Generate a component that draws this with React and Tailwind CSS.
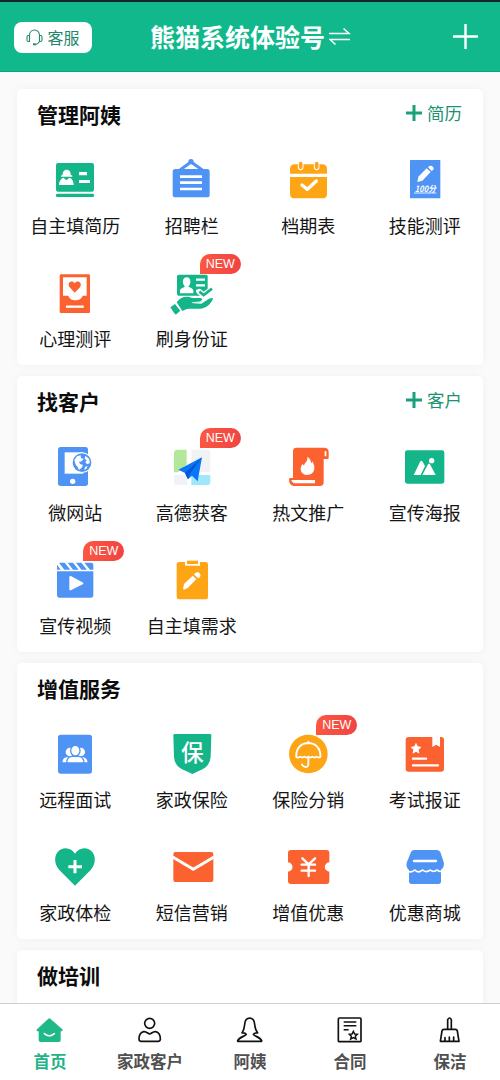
import React from 'react';

const GREEN = '#13b589';
const BLUE = '#4f94f4';
const ORANGE = '#fc6230';
const YELLOW = '#fea516';

// Every icon is drawn on a 144 unit canvas with its origin in the middle
const Icon = ({ className = 'w-12 h-12', children }) => (
    <svg className={`${className} block shrink-0`} viewBox="-72 -72 144 144" fill="none">{children}</svg>
);

const stroke = (color, width) => ({ stroke: color, strokeWidth: width, strokeLinecap: 'round', strokeLinejoin: 'round' });

const ResumeIcon = () => (
    <Icon>
        <rect x="-57" y="-51" width="114" height="86" rx="6" fill={GREEN} />
        <rect x="-57" y="41" width="114" height="10" rx="4" fill={GREEN} />
        <path d="M-37-16C-37-24-34-31-25-31S-13-24-13-16L-8-13V-10H-42V-13ZM-48 15C-48 3-41-5-34-7L-26 1L-17-7C-9-5-4 3-4 15Z" fill="#fff" />
        <path d="M12-24H36V-14H12ZM12 0H45V9H12Z" fill="#fff" />
    </Icon>
);

const BoardIcon = () => (
    <Icon>
        <rect x="-58" y="-33" width="111" height="85" rx="8" fill={BLUE} />
        <path d="M-22-33L-3-47L17-33Z" fill="#fff" />
        <path d="M-35-31L-3-54L30-31" {...stroke(BLUE, 9)} />
        <circle cx="-3" cy="-55" r="8" fill={BLUE} />
        <path d="M-36-10H30M-36 8H30M-36 27H30" stroke="#fff" strokeWidth="8" />
    </Icon>
);

const CalendarIcon = () => (
    <Icon>
        <path d="M-54-19V-33Q-54-47-40-47H43Q57-47 57-33V-19Z" fill={YELLOW} />
        <path d="M-54-9H57V41Q57 55 43 55H-40Q-54 55-54 41Z" fill={YELLOW} />
        <path d="M-22-47V-38M26-47V-38" {...stroke('#fff', 17)} />
        <path d="M-22-49V-38M26-49V-38" {...stroke(YELLOW, 11)} />
        <path d="M-18 15L-2 28L25 3" {...stroke('#fff', 10)} />
    </Icon>
);

const ScoreIcon = () => (
    <Icon>
        <rect x="-45" y="-60" width="91" height="115" rx="2" fill={BLUE} />
        <path d="M-23 6L-20-10L5-35L17-24L-8 2Z" fill="#fff" />
        <path d="M9-38L13-42Q19-45 24-39T23-29L20-27Z" fill="#fff" />
        <text x="1" y="35" textAnchor="middle" fill="#fff" fontSize="26" fontWeight="700" fontStyle="italic" textLength="63" lengthAdjust="spacingAndGlyphs">100分</text>
        <path d="M-33 39H34" stroke="#fff" strokeWidth="2.5" />
    </Icon>
);

const MindIcon = () => (
    <Icon>
        <rect x="-46" y="-56" width="91" height="116" rx="4" fill={ORANGE} />
        <path d="M-36-47H35V8H23C18 26-15 27-20 8H-36Z" fill="#fff" />
        <path d="M-1-1L-16-17C-26-31-9-41-1-29C7-41 24-31 15-17Z" fill={ORANGE} />
        <path d="M-27 41H26" stroke="#fff" strokeWidth="7" />
    </Icon>
);

const IdCardIcon = () => (
    <Icon>
        <rect x="-45" y="-55" width="92" height="63" rx="5" fill={GREEN} />
        <path d="M-36 1V-6C-36-15-26-16-21-19C-31-29-29-47-16-47S-1-29-11-19C-5-16 4-15 4-6V1Z" fill="#fff" />
        <path d="M12-40H39M12-23H39M12-6H18" stroke="#fff" strokeWidth="7" />
        <path d="M22-4L35 7L60-12" {...stroke('#fff', 17)} />
        <path d="M22-4L35 6L60-13" stroke={GREEN} strokeWidth="8" />
        <path d="M-65 43L-51 33L-35 53L-47 64Q-50 65-52 62Z" fill={GREEN} />
        <path d="M-46 28C-36 14-24 10-8 12C2 17 13 14 24 15C35 17 32 26 22 28L3 31L28 32L51 17Q64 12 63 18C55 35 42 46 24 47H-8C-17 47-22 50-29 54Z" fill={GREEN} />
        <path d="M1 29L23 27Q31 25 31 21" {...stroke('#fff', 2.5)} />
    </Icon>
);

const SiteIcon = () => (
    <Icon>
        <rect x="-51" y="-60" width="90" height="117" rx="8" fill={BLUE} />
        <path d="M-31-44H25V20H-31Z" fill="#fff" />
        <circle cx="21" cy="-13" r="31" fill="#fff" />
        <circle cx="21" cy="-13" r="28" fill={BLUE} />
        <path d="M-2-21L6-32L17-35L18-27L26-24L20-17L12-15L15-9L24-6L20 2L12 9L8 0L2-7ZM31-34L42-25L45-12L37-8L31-14L35-20L29-25ZM30 0L38-3L34 6L28 8Z" fill="#fff" />
        <circle cx="-7" cy="43" r="8" fill="#fff" />
    </Icon>
);

const MapIcon = () => (
    <Icon>
        <path d="M-54-42Q-54-52-44-52H-16V-7L-42 16H-54Z" fill="#b3e79a" />
        <path d="M-2-52H45Q55-52 55-42V16H-2ZM-54 24H-14V54H-44Q-54 54-54 44Z" fill="#f0f2f3" />
        <path d="M-2 24H55V44Q55 54 45 54H-2Z" fill="#a0e6fc" />
        <path d="M30-29L-41 8L-21 18L-12 37L0 26L17 43Z" fill="#0a78f5" />
        <path d="M30-29L-21 18L-12 37L-7 21Z" fill="#0556d8" />
    </Icon>
);

const ScrollIcon = () => (
    <Icon>
        <path d="M-45-48Q-45-58-34-58H50Q62-57 62-46V-27Q62-24 58-24H47V46Q47 57 36 57H-43Q-57 55-57 37Q-57 33-53 33H-45Z" fill={ORANGE} />
        <rect x="50" y="-48" width="5" height="16" rx="2" fill="#fff" />
        <path d="M-50 39H21V49H-42Q-48 48-50 39Z" fill="#fff" />
        <path d="M-2-31C10-23 8-15 10-11L13-17C25 2 19 24-2 24S-27 3-16-9L-12-4C-10-14 1-18-2-31Z" fill="#fff" />
    </Icon>
);

const PosterIcon = () => (
    <Icon>
        <rect x="-60" y="-50" width="118" height="100" rx="7" fill={GREEN} />
        <path d="M-34 24L-14-17Q-11-21-8-17L0-3L-13 24ZM-8 24L9-8Q12-13 15-8L32 24Z" fill="#fff" />
        <circle cx="20" cy="-19" r="8" fill="#fff" />
    </Icon>
);

const VideoIcon = () => (
    <Icon>
        <path d="M-54-26H55V45Q55 53 47 53H-46Q-54 53-54 45Z" fill={BLUE} />
        <path d="M-54-46L-43-31H-54ZM-48-52H-31L-14-31H-32ZM-22-52H-6L11-31H-6ZM3-52H19L36-31H19ZM28-52H48Q55-52 55-46V-31H45Z" fill={BLUE} />
        <path d="M-14-9L22 10L-14 28Z" fill="#fff" {...stroke('#fff', 6)} />
    </Icon>
);

const DemandIcon = () => (
    <Icon>
        <rect x="-46" y="-54" width="94" height="112" rx="7" fill={YELLOW} />
        <path d="M-21-55H24V-43H-21Z" fill="#fff" />
        <path d="M-15-58H18V-48H-15Z" fill={YELLOW} />
        <path d="M-27 27L-24 12L2-13L13-2L-12 23L-24 29Z" fill="#fff" />
        <path d="M6-17L10-21Q17-26 23-20T24-8L18-5Z" fill="#fff" />
    </Icon>
);

const MeetingIcon = () => (
    <Icon>
        <rect x="-51" y="-58" width="102" height="117" rx="8" fill={BLUE} />
        <circle cx="-15" cy="-6" r="13" fill="#fff" />
        <circle cx="17" cy="-6" r="13" fill="#fff" />
        <path d="M-37 25V20Q-35 11-24 10H26Q35 12 37 20V25Z" fill="#fff" />
        <ellipse cx="1" cy="-10" rx="14" ry="16" fill="#fff" stroke={BLUE} strokeWidth="4" />
        <path d="M-25 27C-25 13-19 8-9 7H11C21 8 27 13 27 27Z" fill="#fff" stroke={BLUE} strokeWidth="4" />
    </Icon>
);

const InsureIcon = () => (
    <Icon>
        <path d="M-56-56Q-56-60-51-60H54Q58-60 58-56L56 8Q54 28 41 40Q33 46 20 51L1 60L-18 51Q-31 46-39 40Q-53 28-54 8Z" fill={GREEN} />
        <text x="1" y="21" textAnchor="middle" fill="#fff" fontSize="68" fontWeight="500">保</text>
    </Icon>
);

const UmbrellaIcon = () => (
    <Icon>
        <circle cx="1" cy="0" r="58" fill={YELLOW} />
        <path d="M1-37V-32M-35 9C-39-47 41-47 37 9Q31 13 25 8Q19 13 13 8Q7 13 1 8Q-5 13-11 8Q-17 13-23 8Q-29 13-35 9ZM1 9V31Q-1 42-11 38Q-17 36-18 31" {...stroke('#fff', 5.5)} />
    </Icon>
);

const ExamIcon = () => (
    <Icon>
        <rect x="-58" y="-51" width="115" height="104" rx="9" fill={ORANGE} />
        <path d="M22-52H45V-21L34-28L22-21Z" fill="#fff" />
        <path d="M-27-34L-22-23L-11-21L-19-13L-17-1L-27-7L-37-1L-35-13L-43-21L-32-23Z" fill="#fff" />
        <path d="M-36 14H3M-36 34H39" {...stroke('#fff', 7)} />
    </Icon>
);

const HealthIcon = () => (
    <Icon>
        <path d="M0 56L-47 9C-67-14-62-45-40-54C-22-60-8-52 0-40C8-52 22-60 40-54C62-45 67-14 47 9Z" fill={GREEN} />
        <path d="M-20-1H21M0-21V19" stroke="#fff" strokeWidth="9" />
    </Icon>
);

const MailIcon = () => (
    <Icon>
        <rect x="-56" y="-45" width="120" height="90" rx="6" fill={ORANGE} />
        <path d="M-58-30L4 7L66-30" stroke="#fff" strokeWidth="9" />
    </Icon>
);

const CouponIcon = () => (
    <Icon>
        <path d="M-60-42Q-60-51-51-51H55Q64-51 64-42V-14C46-12 46 12 64 14V42Q64 51 55 51H-51Q-60 51-60 42V14C-42 12-42-12-60-14Z" fill={ORANGE} />
        <path d="M-17-26L2-8L21-26M-19-7H21M-19 11H21M2-8V27" {...stroke('#fff', 7)} />
    </Icon>
);

const ShopIcon = () => (
    <Icon>
        <path d="M-48 0H48V43Q48 51 40 51H-40Q-48 51-48 43Z" fill={BLUE} />
        <path d="M-42-45Q-39-51-33-51H35Q42-51 46-45L56-15C60 2 48 14 33 11Q25 20 16 12Q1 24-14 12Q-23 20-31 12C-48 15-58 2-55-13Z" fill={BLUE} />
        <path d="M-50 14C-40 17-34 12-30 9C-20 19-16 14-7 9C3 19 9 12 16 9C26 18 30 11 36 9C43 14 47 15 51 12" {...stroke('#fff', 5)} />
        <path d="M-33-18H33" {...stroke('#fff', 7)} />
    </Icon>
);

// Bottom bar icons
const HomeIcon = () => (
    <Icon>
        <path d="M-5-34Q-2-37 1-34L37-2Q40 3 35 4H32V31Q32 36 27 36H-28Q-34 36-34 31V4H-38Q-43 3-39-2Z" fill="#1fb888" />
        <path d="M-17 11Q-2 24 13 11" {...stroke('#fff', 5)} />
    </Icon>
);

const CustomerIcon = () => (
    <Icon>
        <circle cx="-1" cy="-20" r="15" stroke="#111" strokeWidth="5" />
        <path d="M-19 5C-10 4-6 12-1 12S8 4 17 5C27 7 31 16 31 28Q30 34 24 34H-26Q-33 34-33 28C-33 16-29 7-19 5Z" stroke="#111" strokeWidth="5" />
    </Icon>
);

const NannyIcon = () => (
    <Icon>
        <path d="M-11 13Q-14 8-24 9C-17-1-17-8-16-17C-14-42 12-42 14-17C15-8 15-1 23 9Q13 8 10 13C12 19 30 20 35 32V34H-37V32C-32 20-13 19-11 13Z" {...stroke('#111', 5)} />
    </Icon>
);

const ContractIcon = () => (
    <Icon>
        <rect x="-35" y="-36" width="68" height="71" rx="3" stroke="#111" strokeWidth="5" />
        <path d="M-19-24H19M-19-13H19M-19-1H-4" stroke="#111" strokeWidth="4.5" />
        <path d="M10 4L14 12L22 13L16 19L18 27L10 23L2 27L4 19L-2 13L6 12Z" stroke="#111" strokeWidth="4.5" />
    </Icon>
);

const BroomIcon = () => (
    <Icon>
        <path d="M-7-3V-31Q-1-41 4-31V-3M-18-2H16Q21-2 22 3L27 34H-29L-24 3Q-23-2-18-2ZM-15 34V23M-2 34V21M11 34V21" {...stroke('#111', 5)} />
    </Icon>
);

const sections = [
    {
        title: '管理阿姨',
        action: '简历',
        items: [
            { label: '自主填简历', icon: ResumeIcon },
            { label: '招聘栏', icon: BoardIcon },
            { label: '档期表', icon: CalendarIcon },
            { label: '技能测评', icon: ScoreIcon },
            { label: '心理测评', icon: MindIcon },
            { label: '刷身份证', icon: IdCardIcon, isNew: true },
        ],
    },
    {
        title: '找客户',
        action: '客户',
        items: [
            { label: '微网站', icon: SiteIcon },
            { label: '高德获客', icon: MapIcon, isNew: true },
            { label: '热文推广', icon: ScrollIcon },
            { label: '宣传海报', icon: PosterIcon },
            { label: '宣传视频', icon: VideoIcon, isNew: true },
            { label: '自主填需求', icon: DemandIcon },
        ],
    },
    {
        title: '增值服务',
        items: [
            { label: '远程面试', icon: MeetingIcon },
            { label: '家政保险', icon: InsureIcon },
            { label: '保险分销', icon: UmbrellaIcon, isNew: true },
            { label: '考试报证', icon: ExamIcon },
            { label: '家政体检', icon: HealthIcon },
            { label: '短信营销', icon: MailIcon },
            { label: '增值优惠', icon: CouponIcon },
            { label: '优惠商城', icon: ShopIcon },
        ],
    },
    { title: '做培训', items: [] },
];

const tabs = [
    { label: '首页', icon: HomeIcon, active: true },
    { label: '家政客户', icon: CustomerIcon },
    { label: '阿姨', icon: NannyIcon },
    { label: '合同', icon: ContractIcon },
    { label: '保洁', icon: BroomIcon },
];

const Header = () => (
    <header className="h-[72px] shrink-0 bg-[#10b88c] border-t-2 border-[#14262a] border-b border-b-[#0da47c] pl-3.5 pr-[22px] pt-px flex items-center">
        <button className="w-[78px] h-[31px] rounded-lg bg-white flex items-center justify-center gap-1 text-[#23876a] text-[16px] leading-none">
            <svg className="w-[17px] h-[17px]" viewBox="0 0 17 17" fill="none" stroke="currentColor" strokeWidth="1.1">
                <path d="M3.5 6.5C3.5-.8 13.5-.8 13.5 6.5V12.5Q12 15.2 9.5 15.5M3.5 6V12.5H2.5Q1 12.5 1 11V8Q1 6.5 2.5 6.5H3.5M13.5 6.5H14.5Q16 6.5 16 8V11Q16 12.5 14.5 12.5H13.5" />
                <path d="M7 15.3H9.8" strokeWidth="2" />
            </svg>
            <span className="pb-px">客服</span>
        </button>
        <h1 className="ml-[58px] mr-auto pb-0.5 flex items-center gap-1 text-white text-[25px] leading-9 font-bold">
            <span>熊猫系统体验号</span>
            <svg className="w-[22px] h-5" viewBox="0 0 22 20" fill="none" stroke="#fff" strokeWidth="1.5">
                <path d="M0 7.5H20L14.5 2.5M21 13.5H1L6.5 18.5" />
            </svg>
        </h1>
        <svg className="w-[25px] h-[25px] mb-px" viewBox="0 0 25 25" stroke="#fff" strokeWidth="2.4">
            <path d="M12.5 0V25M0 12.5H25" />
        </svg>
    </header>
);

const MenuItem = ({ item }) => {
    const ItemIcon = item.icon;
    return (
        <div className="relative h-[83px] flex flex-col items-center">
            <ItemIcon />
            {item.isNew && (
                <span className="absolute left-1/2 ml-2 -top-[15px] w-[41px] h-5 rounded-[10px] rounded-bl-none bg-linear-to-r from-[#fc5740] to-[#f04443] text-white font-['Liberation_Sans',sans-serif] text-[12.5px] leading-5 text-center">
                    NEW
                </span>
            )}
            <span className="mt-2 text-[18px] leading-[27px] text-[#151515] whitespace-nowrap">{item.label}</span>
        </div>
    );
};

const Section = ({ section }) => (
    <section className="h-[276px] shrink-0 rounded-[5px] bg-white shadow-[0_0_10px_rgba(0,0,0,0.045)]">
        <div className="h-[52px] pl-5 pr-[21px] flex items-center justify-between">
            <h2 className="pb-[3px] text-[21px] leading-8 font-bold text-[#0c0c0c]">{section.title}</h2>
            {section.action && (
                <button className="flex items-center gap-[5px] pb-[5px] text-[#1b9373] text-[17.5px] leading-6">
                    <svg className="w-4 h-4" viewBox="0 0 16 16" stroke="#18a17b" strokeWidth="3">
                        <path d="M8 0V16M0 8H16" />
                    </svg>
                    <span>{section.action}</span>
                </button>
            )}
        </div>
        <div className="mt-[15px] grid grid-cols-4 gap-y-[29.5px]">
            {section.items.map((item) => <MenuItem key={item.label} item={item} />)}
        </div>
    </section>
);

const TabBar = () => (
    <nav className="h-[77px] shrink-0 bg-white border-t border-[#cfcfcf] grid grid-cols-5">
        {tabs.map((tab) => {
            const TabIcon = tab.icon;
            return (
                <div key={tab.label} className="flex flex-col items-center pt-0.5">
                    <TabIcon />
                    <span className={`-mt-[5px] text-[16.5px] leading-6 font-bold ${tab.active ? 'text-[#1fb388]' : 'text-[#505050]'}`}>{tab.label}</span>
                </div>
            );
        })}
    </nav>
);

const App = () => (
    <div className="w-[500px] h-[1080px] overflow-hidden flex flex-col bg-[#fafafa] font-['Noto_Sans_CJK_SC',sans-serif]">
        <Header />
        <main className="flex-1 min-h-0 overflow-hidden px-[17px] pt-[17px] flex flex-col gap-[11px]">
            {sections.map((section) => <Section key={section.title} section={section} />)}
        </main>
        <TabBar />
    </div>
);

export default App;
